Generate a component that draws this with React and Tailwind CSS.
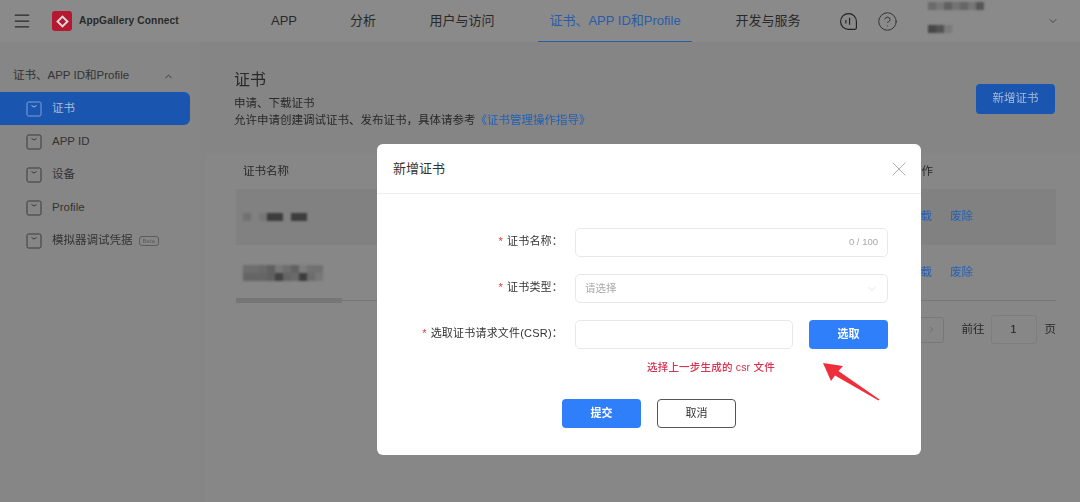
import React from 'react';
import { ChevronDown, ChevronRight, ChevronUp, CircleHelp, Menu, X } from 'lucide-react';

const font = { fontFamily: '"Liberation Sans", "Noto Sans CJK SC", sans-serif' };

const navItems = [
  { label: 'APP', className: 'w-[78px]' },
  { label: '分析', className: 'w-[80px]' },
  { label: '用户与访问', className: 'w-[118px]' },
  { label: '证书、APP ID和Profile', className: 'w-[154px] ml-[17px]', active: true },
  { label: '开发与服务', className: 'w-[118px] ml-[17px]' },
];

const sideItems = [
  { label: '证书', active: true },
  { label: 'APP ID' },
  { label: '设备' },
  { label: 'Profile' },
  { label: '模拟器调试凭据', beta: true },
];

const ItemIcon = ({ light }) => (
  <svg width="16" height="16" viewBox="0 0 16 16" fill="none" className="flex-none">
    <rect x="1" y="1" width="14" height="14" rx="1.5" stroke={light ? '#7fa3d8' : '#3a3a3a'} strokeWidth="1" />
    <path d="M5.5 4.5 L8 6 L10.5 4.5" stroke={light ? '#a8bcd8' : '#3a3a3a'} strokeWidth="1" />
  </svg>
);

const Logo = () => (
  <div className="w-[20px] h-[20px] rounded-[3px] bg-[#b5182f] flex items-center justify-center">
    <div className="w-[9px] h-[9px] border-2 border-[#d8d8d8] rotate-45" />
  </div>
);

const Mosaic = ({ rows }) => (
  <div className="flex flex-col blur-[1px]">
    {rows.map((row, i) => (
      <div key={i} className="flex h-[8px]">
        {row.map((c, j) => (
          <div key={j} className="w-[8px] h-[8px]" style={{ backgroundColor: c }} />
        ))}
      </div>
    ))}
  </div>
);

const Field = ({ label, children }) => (
  <div className="flex items-center">
    <div className="w-[186px] flex-none flex justify-end text-[11px] leading-[24px] text-[#333333] tracking-[0.2px] pb-[3px]">
      <span className="text-[#e03c3c] mr-[4px]">*</span>
      {label}：
    </div>
    <div className="flex-1 ml-[12px] flex gap-[16px]">{children}</div>
  </div>
);

const BoxInput = ({ className, children }) => (
  <div className={`h-[29px] border border-[#e8e8e8] rounded-[5px] bg-white flex items-center justify-between px-[9px] text-[10.5px] text-[#a8a8a8] ${className}`}>
    {children}
  </div>
);

const App = () => {
  return (
    <div className="relative w-[1080px] h-[502px] overflow-hidden bg-[#858585]" style={font}>
      {/* page under the dialog, colours already dimmed */}
      <div className="flex flex-col h-full blur-[0.4px]">
        <header className="h-[42px] flex-none bg-[#8a8a8a] flex items-center text-[#292929]">
          <Menu className="ml-[12px] w-[20px] h-[20px]" strokeWidth={1.5} />
          <div className="ml-[20px]"><Logo /></div>
          <span className="ml-[7px] text-[10.2px] font-bold tracking-[0.1px] w-[150px]">AppGallery Connect</span>
          <nav className="flex h-full ml-[16px]">
            {navItems.map((item) => (
              <div
                key={item.label}
                className={`${item.className} flex items-center justify-center text-[13px] ${item.active ? 'text-[#2a5ca8] border-b border-[#2a5ca8]' : ''}`}
              >
                {item.label}
              </div>
            ))}
          </nav>
          <svg width="19" height="19" viewBox="0 0 18 18" fill="none" stroke="#222222" strokeWidth="1.1" className="ml-[12px] flex-none">
            <path d="M9 1.5 A7.5 7.5 0 1 0 9 16.5 L15 16.5 Q16.5 16.5 16.5 15 L16.5 9 A7.5 7.5 0 0 0 9 1.5 Z" />
            <path d="M6.5 7.5 V11 M10 5.5 V12" />
          </svg>
          <CircleHelp className="ml-[19px] w-[21px] h-[21px]" strokeWidth={1} />
          <div className="ml-[30px] w-[95px] h-[42px] flex flex-col justify-between pt-[2px] pb-[9px]">
            <Mosaic rows={[['#6a6a6a', '#787878', '#606060', '#737373', '#656565', '#767676', '#565656', '#8a8a8a', '#8a8a8a']]} />
            <Mosaic rows={[['#474747', '#535353', '#7a7a7a']]} />
          </div>
          <ChevronDown className="ml-[24px] w-[12px] h-[12px] text-[#474747]" />
        </header>

        <div className="flex flex-1 min-h-0">
          <aside className="w-[200px] flex-none bg-[#868686] pt-[23px] text-[#333333] text-[11.5px]">
            <div className="h-[22px] flex items-center pl-[13px] pr-[26px] justify-between">
              <span>证书、APP ID和Profile</span>
              <ChevronUp className="w-[11px] h-[11px]" />
            </div>
            <div className="mt-[5px] flex flex-col gap-0">
              {sideItems.map((item) => (
                <div
                  key={item.label}
                  className={`w-[190px] h-[33px] flex items-center pl-[26px] gap-[10px] ${item.active ? 'bg-[#1a55b0] rounded-r-[6px] text-[#a8bcd8]' : ''}`}
                >
                  <ItemIcon light={item.active} />
                  <span>{item.label}</span>
                  {item.beta && (
                    <span className="ml-[-4px] border border-[#5c5c5c] rounded-[3px] text-[6px] leading-[8px] px-[3px] text-[#5c5c5c]">Beta</span>
                  )}
                </div>
              ))}
            </div>
          </aside>

          <main className="flex-1 min-w-0 bg-[#858585]">
            <div className="h-[111px] pl-[34px] pr-[25px] flex justify-between">
              <div className="pt-[27px] text-[#292929]">
                <h1 className="text-[16px] leading-[22px]">证书</h1>
                <p className="mt-[4px] text-[11.5px] leading-[17px]">申请、下载证书</p>
                <p className="text-[11.5px] leading-[17px]">
                  允许申请创建调试证书、发布证书，具体请参考<span className="text-[#2260b8]">《证书管理操作指导》</span>
                </p>
              </div>
              <button className="mt-[42px] w-[79px] h-[30px] rounded-[4px] bg-[#1a55b0] text-[#a8bcd8] text-[11.5px]">新增证书</button>
            </div>

            <div className="h-full bg-[#878787] ml-[5px] pl-[31px] pr-[24px]">
              <div className="h-[36px] pt-[1px] flex items-center justify-between pl-[7px] text-[11.5px] text-[#292929]">
                <span>证书名称</span>
                <span className="mr-[123px]">操作</span>
              </div>
              <div className="h-[56px] bg-[#818181] flex items-center justify-between pl-[7px] pr-[83px]">
                <Mosaic rows={[['#717171', '#818181', '#767676', '#3d3d3d', '#3d3d3d', '#818181', '#3d3d3d', '#3d3d3d']]} />
                <span className="text-[11.5px] text-[#2260b8] flex gap-[18px]"><span>下载</span><span>废除</span></span>
              </div>
              <div className="h-[56px] border-b border-[#767676] flex items-center justify-between pl-[7px] pr-[83px]">
                <Mosaic rows={[
                  ['#6e6e6e', '#6e6e6e', '#6a6a6a', '#606060', '#787878', '#6e6e6e', '#626262', '#7d7d7d', '#717171', '#717171'],
                  ['#656565', '#656565', '#656565', '#606060', '#434343', '#656565', '#6a6a6a', '#3e3e3e', '#6c6c6c', '#787878'],
                ]} />
                <span className="text-[11.5px] text-[#2260b8] flex gap-[18px]"><span>下载</span><span>废除</span></span>
              </div>
              <div className="w-[106px] h-[5px] bg-[#767676] mt-[-3px]" />
              <div className="flex items-center justify-end mt-[12px] text-[11.5px] text-[#292929]">
                <div className="w-[25px] h-[26px] border border-[#787878] rounded-[3px] flex items-center justify-center">
                  <ChevronRight className="w-[9px] h-[9px] text-[#666666]" />
                </div>
                <span className="ml-[18px]">前往</span>
                <div className="ml-[6px] w-[46px] h-[29px] border border-[#7d7d7d] rounded-[3px] flex items-center justify-center text-[#1f1f1f]">1</div>
                <span className="ml-[8px]">页</span>
              </div>
            </div>
          </main>
        </div>
      </div>

      {/* dialog */}
      <div className="absolute inset-0 pl-[377px] pt-[144px]">
        <div className="relative w-[544px] h-[311px] bg-white rounded-[6px]">
          <div className="h-[50px] border-b border-[#eeeeee] flex items-center justify-between pl-[16px] pr-[10px]">
            <span className="text-[13px] text-[#333333]">新增证书</span>
            <X className="w-[24px] h-[24px] text-[#999999]" strokeWidth={0.8} />
          </div>
          <div className="pt-[34px] flex flex-col gap-[17px] pr-[33px]">
            <Field label="证书名称">
              <BoxInput className="flex-1">
                <span />
                <span className="text-[9.5px]">0 / 100</span>
              </BoxInput>
            </Field>
            <Field label="证书类型">
              <BoxInput className="flex-1">
                <span>请选择</span>
                <ChevronDown className="w-[12px] h-[12px] text-[#cccccc]" strokeWidth={1.2} />
              </BoxInput>
            </Field>
            <Field label="选取证书请求文件(CSR)">
              <BoxInput className="flex-1" />
              <button className="w-[79px] h-[29px] flex-none rounded-[4px] bg-[#2f7ffb] text-white text-[11px] font-bold">选取</button>
            </Field>
          </div>
          <div className="mt-[11px] pl-[270px] text-[10.5px] leading-[14px] tracking-[0.2px] font-medium text-[#d8304f]">选择上一步生成的 csr 文件</div>
          <div className="mt-[25px] flex pl-[185px] gap-[16px]">
            <button className="w-[79px] h-[29px] rounded-[4px] bg-[#2f7ffb] text-white text-[11px] font-bold">提交</button>
            <button className="w-[79px] h-[29px] rounded-[4px] border border-[#555555] text-[#333333] text-[11px]">取消</button>
          </div>

          {/* red annotation arrow */}
          <svg width="60" height="42" viewBox="0 0 60 42" className="absolute left-[445px] top-[218px]">
            <path d="M1 1 L21 4 L16.5 9 L57.5 37.5 L56.5 38.5 L13 13.5 L9 19 Z" fill="#ee2e3a" />
          </svg>
        </div>
      </div>
    </div>
  );
};

export default App;
